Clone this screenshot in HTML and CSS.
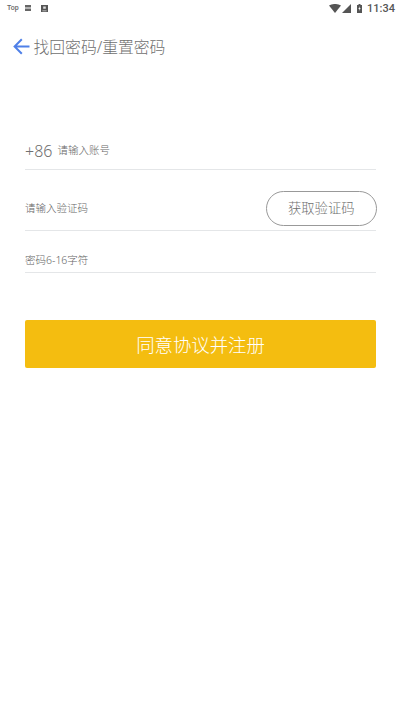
FILE: index.html
```html
<!DOCTYPE html>
<html lang="zh-CN">
  <head>
    <meta charset="UTF-8" />
    <meta name="viewport" content="width=device-width, initial-scale=1.0" />
    <title>找回密码</title>
    <link rel="stylesheet" href="styles.css">
  </head>
  <body>
    <div class="status_bar">
      <div class="status_left">
        <span class="status_top">Top</span>
        <svg class="status_icon" width="6" height="6" viewBox="0 0 6 6"><path d="M0 0h6v2.6H0zM0 3.4h6V6H0z" fill="#666"/></svg>
        <svg class="status_icon" width="7" height="7" viewBox="0 0 7 7"><path d="M0 0h7v7H0z" fill="#555"/><path d="M2.2 1.4h2.6v2.4H2.2zM1.4 5.6h4.2v.6H1.4z" fill="#ddd"/></svg>
      </div>
      <div class="status_right">
        <svg width="12" height="9" viewBox="0 0 12 9"><path d="M0 1.4C3.4-.5 8.6-.5 12 1.4L6 9z" fill="#555"/></svg>
        <svg width="9" height="9" viewBox="0 0 9 9"><path d="M9 0v9H0z" fill="#555"/></svg>
        <svg class="status_battery" width="5" height="9" viewBox="0 0 5 9"><path d="M1.5 0h2v1H5v8H0V1h1.5z" fill="#555"/><path d="M2.8 2 1.4 5h1v2l1.2-3h-1z" fill="#fff"/></svg>
        <span class="status_time">11:34</span>
      </div>
    </div>

    <div class="header">
      <svg class="back" width="17" height="17" viewBox="0 0 17 17"><path d="M16.5 8.5H2M8.8 1.2 1.6 8.5l7.2 7.3" fill="none" stroke="#4f80e8" stroke-width="2"/></svg>
      <h1 class="title">找回密码/重置密码</h1>
    </div>

    <form class="form">
      <div class="row row_phone">
        <span class="prefix">+86</span>
        <span class="hint hint_phone">请输入账号</span>
      </div>
      <div class="row row_code">
        <span class="hint hint_code">请输入验证码</span>
        <button type="button" class="code_btn">获取验证码</button>
      </div>
      <div class="row row_pwd">
        <span class="hint">密码6-16字符</span>
      </div>
      <button type="button" class="submit">同意协议并注册</button>
    </form>
  </body>
</html>
```

FILE: styles.css
```css
* {
  margin: 0;
  padding: 0;
  box-sizing: border-box;
}

body {
  width: 400px;
  height: 710px;
  overflow: hidden;
  background-color: #fff;
  font-family: "Noto Sans", "Noto Sans CJK SC", sans-serif;
  color: #888;
}

.status_bar {
  display: flex;
  justify-content: space-between;
  align-items: center;
  height: 16px;
  padding: 0 5px 0 7px;
}

.status_left,
.status_right {
  display: flex;
  align-items: center;
}

.status_top {
  font-family: "Roboto", sans-serif;
  font-size: 7px;
  font-weight: 500;
  color: #666;
  width: 18px;
}

.status_icon {
  margin-right: 10px;
}

.status_right svg {
  margin-right: 1px;
}

.status_right .status_battery {
  margin: 0 5px 0 5px;
}

.status_time {
  font-family: "Roboto", sans-serif;
  font-size: 11px;
  font-weight: 500;
  color: #555;
}

.header {
  display: flex;
  align-items: center;
  height: 30px;
  margin-top: 15px;
  padding-left: 12.5px;
}

.back {
  margin-right: 4px;
}

.title {
  font-size: 15.8px;
  font-weight: 300;
  color: #707070;
}

.form {
  padding: 0 24px 0 25px;
  margin-top: 78px;
}

.row {
  display: flex;
  align-items: center;
  border-bottom: 1px solid #e4e6e8;
}

.row_phone {
  height: 31px;
  padding-bottom: 6px;
}

.row_code {
  justify-content: space-between;
  height: 61px;
  padding-top: 21px;
  padding-bottom: 4px;
}

.row_pwd {
  height: 42px;
  padding-top: 16px;
}

.prefix {
  font-size: 16px;
  font-weight: 300;
  color: #707070;
  margin-right: 5px;
}

.hint {
  font-size: 10.5px;
  font-weight: 300;
  color: #666;
}

.hint_phone {
  margin-bottom: 3px;
}

.hint_code {
  margin-bottom: 2px;
}

.code_btn {
  width: 110.5px;
  height: 34.5px;
  margin-right: -0.5px;
  padding-bottom: 2px;
  border: 1px solid #999;
  border-radius: 18px;
  background-color: #fff;
  font-family: inherit;
  font-size: 13.3px;
  font-weight: 300;
  color: #707070;
}

.submit {
  display: block;
  width: 100%;
  height: 48px;
  margin-top: 47px;
  border: none;
  border-radius: 2px;
  background-color: #f4bd10;
  font-family: inherit;
  font-size: 18.4px;
  font-weight: 300;
  color: #fff;
}
```
